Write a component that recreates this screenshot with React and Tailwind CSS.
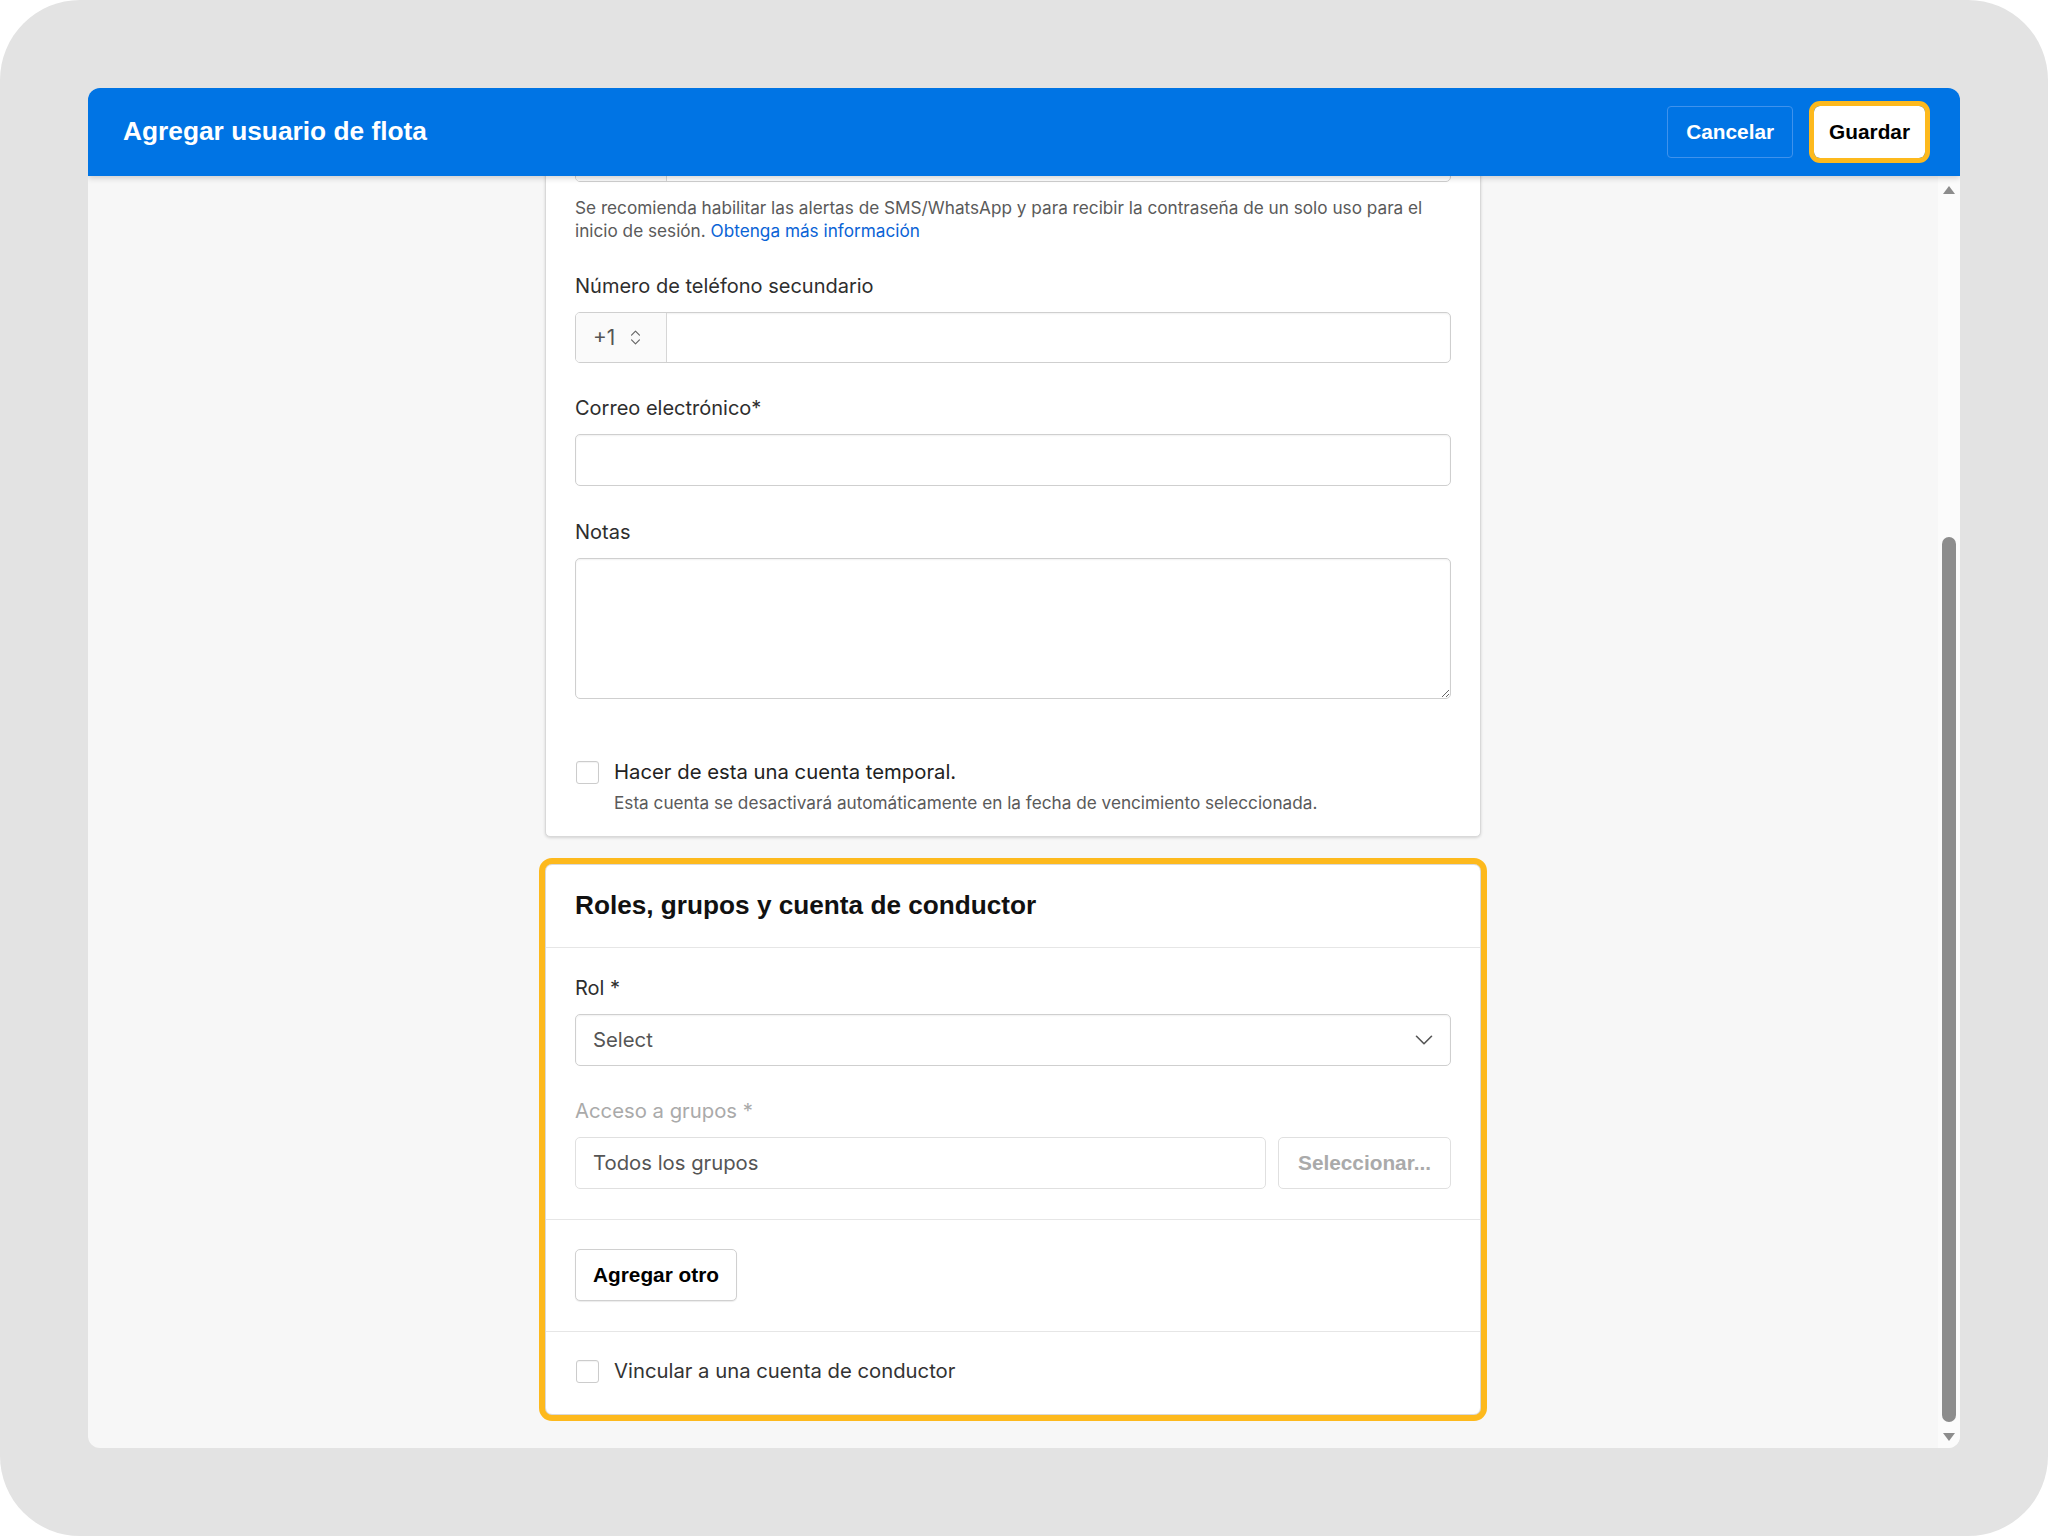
import React from 'react';
import { ChevronDown, ChevronsUpDown } from 'lucide-react';

const labelCls = "text-[20px] leading-[28px] text-[#2e2e2e]";
const inputCls = "h-[52px] rounded-[5px] border border-[#cfcfcf] bg-white shadow-[inset_0_1px_2px_rgba(0,0,0,0.06)]";
const btnFont = { fontFamily: '"Liberation Sans", Arial, sans-serif' };

function Checkbox() {
  return <div className="w-[23px] h-[23px] shrink-0 rounded-[3px] border border-[#cccccc] bg-white shadow-[inset_0_1px_1px_rgba(0,0,0,0.05)]" />;
}

function PhoneInput({ empty }) {
  return (
    <div className="flex h-[51px] rounded-[5px] border border-[#cfcfcf] bg-white overflow-hidden shadow-[inset_0_1px_2px_rgba(0,0,0,0.06)]">
      <div className="w-[91px] flex items-center pl-[17px] gap-[11px] bg-[#fafafa] border-r border-[#d6d6d6] text-[20.8px] text-[#555555]">
        {!empty && <span>+1</span>}
        {!empty && <ChevronsUpDown size={19} strokeWidth={1.5} className="text-[#666666]" />}
      </div>
      <div className="flex-1" />
    </div>
  );
}

export default function App() {
  return (
    <div className="w-[2048px] h-[1536px] bg-white" style={{ fontFamily: 'Inter, "Noto Sans", sans-serif' }}>
      <div className="w-full h-full rounded-[80px] bg-[#e3e3e3] p-[88px] flex">
        <div className="flex-1 flex flex-col rounded-[12px] overflow-hidden bg-[#f7f7f7]">
          {/* Header */}
          <div className="relative z-10 h-[88px] shrink-0 bg-[#0074e4] flex items-center justify-between pl-[35px] pr-[35px] shadow-[0_2px_6px_rgba(0,0,0,0.18)]">
            <div className="text-white font-bold text-[26.3px]" style={btnFont}>Agregar usuario de flota</div>
            <div className="flex items-center gap-[21px]" style={btnFont}>
              <button className="h-[52px] px-[18px] rounded-[4px] border border-[#3f92ec] text-white font-bold text-[20.8px]">Cancelar</button>
              <button className="h-[52px] px-[15px] rounded-[6px] bg-white text-black font-bold text-[20.8px] outline-[5px] outline-solid outline-[#fdb91d]">Guardar</button>
            </div>
          </div>

          {/* Body */}
          <div className="flex-1 flex min-h-0">
            <div className="flex-1 overflow-hidden flex flex-col items-center">
              {/* Card 1 */}
              <div className="w-[936px] shrink-0 mt-[-109px] bg-white border border-[#d9d9d9] rounded-[5px] shadow-[0_1px_3px_rgba(0,0,0,0.15)] px-[29px] pt-[63px] pb-[22px]">
                <PhoneInput empty />
                <p className="mt-[14px] text-[17.2px] leading-[23px] text-[#5a5a5a]">
                  Se recomienda habilitar las alertas de SMS/WhatsApp y para recibir la contraseña de un solo uso para el inicio de sesión.{' '}
                  <span className="text-[#0a63d6]">Obtenga más información</span>
                </p>
                <div className={`mt-[30px] ${labelCls}`}>Número de teléfono secundario</div>
                <div className="mt-[12px]"><PhoneInput /></div>
                <div className={`mt-[31px] ${labelCls}`}>Correo electrónico*</div>
                <div className={`mt-[12px] ${inputCls}`} />
                <div className={`mt-[32px] ${labelCls}`}>Notas</div>
                <textarea className="mt-[12px] block w-full h-[141px] rounded-[5px] border border-[#cfcfcf] bg-white shadow-[inset_0_1px_2px_rgba(0,0,0,0.06)] outline-none" />
                <div className="mt-[59px] flex items-center gap-[15px] pl-[1px]">
                  <Checkbox />
                  <span className="text-[20.3px] leading-[28px] text-[#222222]">Hacer de esta una cuenta temporal.</span>
                </div>
                <div className="mt-[5px] pl-[39px] text-[17.2px] leading-[23px] text-[#5a5a5a]">
                  Esta cuenta se desactivará automáticamente en la fecha de vencimiento seleccionada.
                </div>
              </div>

              {/* Card 2 */}
              <div className="w-[936px] shrink-0 mt-[27px] bg-white border border-[#d9d9d9] rounded-[7px] shadow-[0_1px_3px_rgba(0,0,0,0.15)] outline-[6px] outline-solid outline-[#fdb91d]">
                <div className="px-[29px] pt-[24px] pb-[26px] border-b border-[#e6e6e6]">
                  <div className="text-[26.2px] leading-[32px] font-bold text-[#111111]" style={btnFont}>Roles, grupos y cuenta de conductor</div>
                </div>
                <div className="px-[29px] pt-[26px] pb-[30px] border-b border-[#e6e6e6]">
                  <div className={labelCls}>Rol *</div>
                  <div className={`mt-[12px] flex items-center justify-between pl-[17px] pr-[11px] ${inputCls} border-[#c9c9c9]`}>
                    <span className="text-[20.3px] text-[#555555]">Select</span>
                    <ChevronDown size={30} strokeWidth={1.3} className="text-[#555555]" />
                  </div>
                  <div className="mt-[31px] text-[20.3px] leading-[28px] text-[#aaaaaa]">Acceso a grupos *</div>
                  <div className="mt-[12px] flex gap-[12px]">
                    <div className={`flex-1 flex items-center pl-[17px] ${inputCls} border-[#e0e0e0] shadow-none`}>
                      <span className="text-[20.3px] text-[#555555]">Todos los grupos</span>
                    </div>
                    <div className="w-[173px] h-[52px] rounded-[5px] border border-[#e0e0e0] bg-white flex items-center justify-center text-[20.8px] font-bold text-[#aaaaaa]" style={btnFont}>
                      Seleccionar...
                    </div>
                  </div>
                </div>
                <div className="px-[29px] pt-[29px] pb-[30px] border-b border-[#e6e6e6]">
                  <button className="h-[52px] px-[17px] rounded-[5px] border border-[#d0d0d0] bg-white shadow-[0_1px_1px_rgba(0,0,0,0.08)] font-bold text-[20.8px] text-black" style={btnFont}>
                    Agregar otro
                  </button>
                </div>
                <div className="px-[29px] pt-[25px] pb-[29px]">
                  <div className="flex items-center gap-[15px] pl-[1px]">
                    <Checkbox />
                    <span className="text-[20.3px] leading-[28px] text-[#333333]">Vincular a una cuenta de conductor</span>
                  </div>
                </div>
              </div>
            </div>

            {/* Scrollbar */}
            <div className="w-[22px] shrink-0 bg-[#fbfbfb] flex flex-col items-center">
              <svg width="12" height="8" viewBox="0 0 12 8" className="mt-[10px]"><path d="M6 0 L12 8 L0 8 Z" fill="#8c8c8c" /></svg>
              <div className="mt-[343px] w-[14px] h-[885px] rounded-full bg-[#8c8c8c]" />
              <svg width="12" height="8" viewBox="0 0 12 8" className="mt-[11px]"><path d="M0 0 L12 0 L6 8 Z" fill="#8c8c8c" /></svg>
            </div>
          </div>
        </div>
      </div>
    </div>
  );
}
